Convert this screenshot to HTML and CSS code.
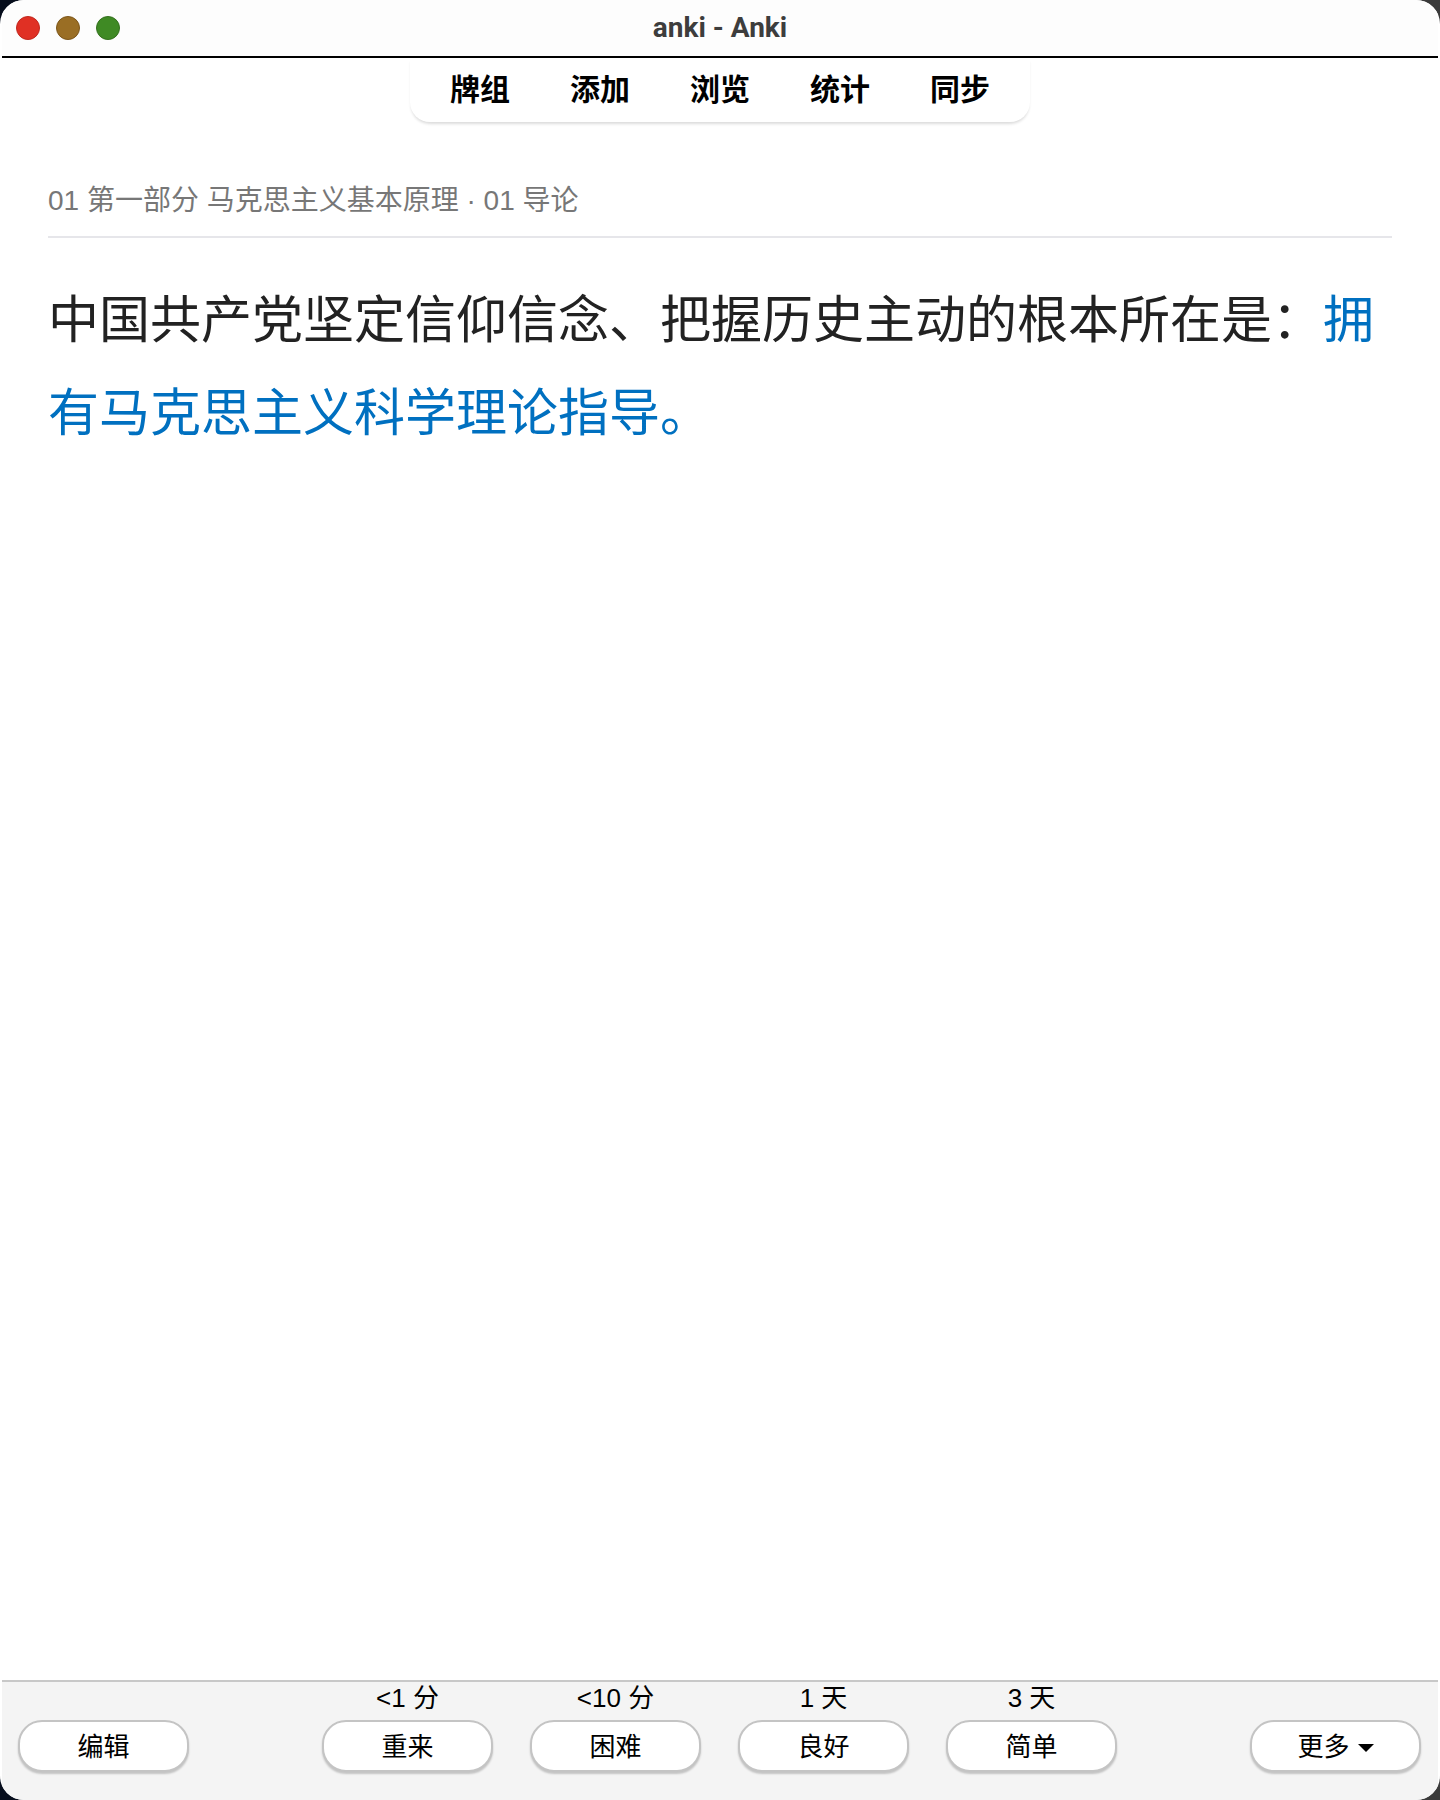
FILE: index.html
```html
<!DOCTYPE html>
<html lang="zh-CN">
  <head>
    <meta charset="UTF-8" />
    <meta name="viewport" content="width=device-width, initial-scale=1.0" />
    <title>anki - Anki</title>
    <link rel="stylesheet" href="styles.css">
  </head>
  <body>
    <div class="window">
      <div class="titlebar">
        <div class="lights">
          <span class="light red"></span>
          <span class="light amber"></span>
          <span class="light green"></span>
        </div>
        <div class="window-title">anki - Anki</div>
      </div>

      <nav class="toolbar">
        <a>牌组</a>
        <a>添加</a>
        <a>浏览</a>
        <a>统计</a>
        <a>同步</a>
      </nav>

      <main class="card">
        <div class="deck-path">01 第一部分 马克思主义基本原理 · 01 导论</div>
        <div class="question">中国共产党坚定信仰信念、把握历史主动的根本所在是：<span class="answer">拥有马克思主义科学理论指导。</span></div>
      </main>

      <div class="bottombar">
        <div class="bar-left">
          <button class="pill">编辑</button>
        </div>
        <div class="answers">
          <div class="answer-col">
            <span class="due">&lt;1 分</span>
            <button class="pill">重来</button>
          </div>
          <div class="answer-col">
            <span class="due">&lt;10 分</span>
            <button class="pill">困难</button>
          </div>
          <div class="answer-col">
            <span class="due">1 天</span>
            <button class="pill">良好</button>
          </div>
          <div class="answer-col">
            <span class="due">3 天</span>
            <button class="pill">简单</button>
          </div>
        </div>
        <div class="bar-right">
          <button class="pill">更多<span class="caret"></span></button>
        </div>
      </div>
    </div>
  </body>
</html>
```

FILE: styles.css
```css
html,
body {
  margin: 0;
  height: 1800px;
}
body {
  background: linear-gradient(to right, #060d1c 0%, #060d1c 50%, #3a3a3a 50%, #3a3a3a 100%);
  font-family: "Liberation Sans", "Noto Sans CJK SC", sans-serif;
  overflow: hidden;
}
.window {
  height: 1800px;
  box-sizing: border-box;
  padding: 0 2px;
  background: #fff;
  border-radius: 24px;
  display: flex;
  flex-direction: column;
  overflow: hidden;
}

/* title bar */
.titlebar {
  height: 58px;
  flex: none;
  box-sizing: border-box;
  padding-bottom: 2px;
  border-bottom: 2px solid #000;
  background: #fdfdfd;
  display: flex;
  align-items: center;
  justify-content: center;
  position: relative;
}
.lights {
  position: absolute;
  left: 14px;
  top: 16px;
  display: flex;
  gap: 16px;
}
.light {
  width: 24px;
  height: 24px;
  box-sizing: border-box;
  border-radius: 50%;
  border: 1px solid;
}
.red {
  background: #e03024;
  border-color: #c0281e;
}
.amber {
  background: #9a6e24;
  border-color: #7c561a;
}
.green {
  background: #3f8a24;
  border-color: #34701e;
}
.window-title {
  font-family: Roboto, "Liberation Sans", sans-serif;
  font-size: 28px;
  font-weight: 700;
  color: #3d3d3d;
}

/* top toolbar */
.toolbar {
  flex: none;
  align-self: center;
  height: 64px;
  box-sizing: border-box;
  padding: 0 40px 7px;
  display: flex;
  align-items: center;
  gap: 60px;
  background: #fff;
  border-radius: 0 0 20px 20px;
  box-shadow: 0 3px 3px -1px rgba(0, 0, 0, 0.14);
  clip-path: inset(0 -6px -6px -6px);
}
.toolbar a {
  font-family: "Noto Sans CJK SC", sans-serif;
  font-size: 30px;
  font-weight: 700;
  line-height: 40px;
  color: #000;
}

/* card */
.card {
  flex: 1;
  background: #fff;
  padding: 59px 46px 0;
}
.deck-path {
  font-size: 28px;
  line-height: 40px;
  color: #777;
  padding-bottom: 15px;
  border-bottom: 2px solid #e6e6ea;
}
.question {
  font-size: 51px;
  line-height: 93px;
  color: #222;
  margin-top: 36px;
}
.answer {
  color: #0070c0;
}

/* bottom bar */
.bottombar {
  flex: none;
  height: 120px;
  box-sizing: border-box;
  border-top: 2px solid #c8c8c8;
  background: #f4f4f4;
  padding: 0 17px 28px 16px;
  display: grid;
  grid-template-columns: 1fr auto 1fr;
  align-items: end;
}
.bar-right {
  display: flex;
  justify-content: flex-end;
}
.answers {
  display: flex;
  gap: 37px;
}
.answer-col {
  display: flex;
  flex-direction: column;
  align-items: center;
  gap: 6px;
}
.due {
  font-size: 26px;
  line-height: 32px;
  color: #000;
}
.pill {
  width: 171px;
  height: 52px;
  box-sizing: border-box;
  padding: 0 0 3px;
  border: 2px solid #c4c4c4;
  border-radius: 24px;
  background: #fff;
  box-shadow: 0 2px 2px rgba(0, 0, 0, 0.2);
  font-family: "Liberation Sans", "Noto Sans CJK SC", sans-serif;
  font-size: 26px;
  color: #000;
  display: flex;
  align-items: center;
  justify-content: center;
}
.caret {
  margin-left: 8px;
  margin-top: 7px;
  border-left: 8px solid transparent;
  border-right: 8px solid transparent;
  border-top: 8px solid #000;
}
```
